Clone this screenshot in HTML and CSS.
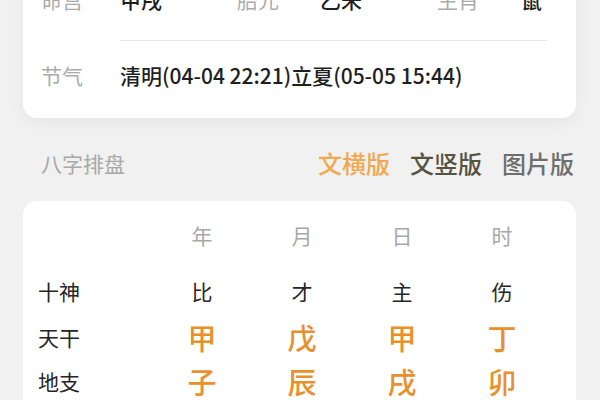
FILE: index.html
```html
<!DOCTYPE html>
<html lang="zh-CN">
<head>
<meta charset="utf-8">
<title>八字排盘</title>
<link rel="stylesheet" href="styles.css">
</head>
<body>
<div class="card info-card">
  <div class="info-row first">
    <div class="info-label">命宫</div>
    <div class="info-content">
      <span class="val w117">甲戌</span>
      <span class="lbl w83">胎元</span>
      <span class="val w117">乙未</span>
      <span class="lbl w84">生肖</span>
      <span class="val">鼠</span>
    </div>
  </div>
  <div class="info-row second">
    <div class="info-label">节气</div>
    <div class="info-content divided">
      <span class="val">清明(04-04 22:21)立夏(05-05 15:44)</span>
    </div>
  </div>
</div>

<div class="section-head">
  <div class="section-title">八字排盘</div>
  <div class="tabs">
    <span class="tab active">文横版</span>
    <span class="tab olive">文竖版</span>
    <span class="tab grey">图片版</span>
  </div>
</div>

<div class="card pillar-card">
  <div class="pillar-grid">
    <div class="cell head"></div>
    <div class="cell head">年</div>
    <div class="cell head">月</div>
    <div class="cell head">日</div>
    <div class="cell head">时</div>

    <div class="cell row-label god">十神</div>
    <div class="cell god">比</div>
    <div class="cell god">才</div>
    <div class="cell god">主</div>
    <div class="cell god">伤</div>

    <div class="cell row-label big-row">天干</div>
    <div class="cell big big-row">甲</div>
    <div class="cell big big-row">戊</div>
    <div class="cell big big-row">甲</div>
    <div class="cell big big-row">丁</div>

    <div class="cell row-label big-row">地支</div>
    <div class="cell big big-row">子</div>
    <div class="cell big big-row">辰</div>
    <div class="cell big big-row">戌</div>
    <div class="cell big big-row">卯</div>
  </div>
</div>
</body>
</html>
```

FILE: styles.css
```css
html, body {
  margin: 0;
  padding: 0;
}

body {
  background: #f1f1f1;
  padding: 0 24px 0 23px;
  font-family: "Noto Sans CJK SC", "Noto Sans", sans-serif;
  overflow: hidden;
  height: 400px;
  box-sizing: border-box;
}

.card {
  background: #ffffff;
  border-radius: 14px;
}

.info-card {
  margin-top: -37px;
  padding: 0 29px 0 18px;
  box-shadow: 0 4px 14px rgba(0, 0, 0, 0.05);
}

.info-row {
  display: flex;
  font-size: 21px;
  line-height: 28px;
}

.info-label {
  width: 79px;
  flex: none;
  color: #ababab;
}

.info-row.first .info-label,
.info-row.first .info-content {
  padding: 22px 0 27px;
}

.info-row.second .info-label {
  padding: 21px 0 29px;
}

.info-content {
  flex: 1;
  display: flex;
  white-space: nowrap;
}

.info-content.divided {
  border-top: 1px solid #e6e6e6;
  padding: 20px 0 29px;
}

.val {
  color: #1f1f1f;
  font-weight: 500;
}

.lbl {
  color: #ababab;
}

.w117 { width: 117px; flex: none; }
.w83 { width: 83px; flex: none; }
.w84 { width: 84px; flex: none; }

.section-head {
  display: flex;
  justify-content: space-between;
  align-items: center;
  padding: 30px 2px 23px 18px;
  height: 30px;
}

.section-title {
  font-size: 21px;
  line-height: 30px;
  color: #a8a8a8;
}

.tabs {
  display: flex;
  gap: 20px;
  font-size: 24px;
  line-height: 30px;
  font-weight: 500;
}

.tab.active { color: #f2a84e; }
.tab.olive { color: #55533d; }
.tab.grey { color: #6e6e6e; }

.pillar-card {
  border-radius: 14px 14px 0 0;
  padding: 19px 25px 0 15px;
}

.pillar-grid {
  display: grid;
  grid-template-columns: 114px repeat(4, 100px);
  grid-template-rows: 56px 39px 44px 44px;
  align-items: start;
}

.cell {
  text-align: center;
  font-size: 21px;
  line-height: 30px;
  color: #262626;
}

.cell.head {
  color: #a8a8a8;
}

.cell.row-label {
  text-align: left;
}

.cell.big-row {
  line-height: 44px;
}

.cell.big {
  font-size: 29px;
  font-weight: 500;
  color: #e8912c;
}
```
